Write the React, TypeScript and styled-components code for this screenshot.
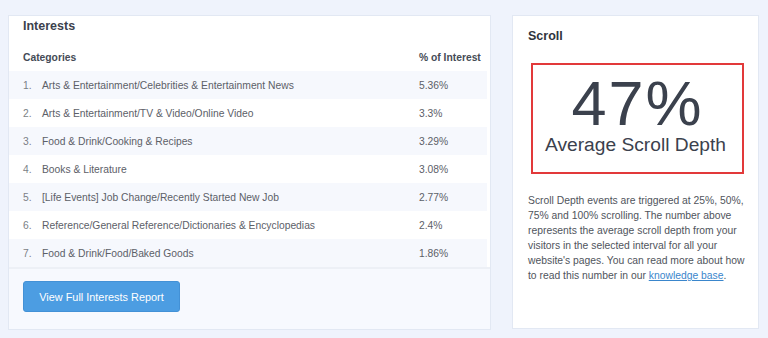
import React from "react";
import styled, { createGlobalStyle } from "styled-components";

const Global = createGlobalStyle`
  html, body { margin: 0; padding: 0; background: #eff3fc; }
  body { font-family: "Liberation Sans", Arial, sans-serif; overflow: hidden; }
`;

const Page = styled.div`
  display: flex;
  align-items: flex-start;
  gap: 21px;
  padding: 15px 0 0 8px;
  width: 768px;
  height: 338px;
  box-sizing: border-box;
`;

const Card = styled.section<{ $w: number; $h: number }>`
  width: ${(p) => p.$w}px;
  height: ${(p) => p.$h}px;
  box-sizing: border-box;
  background: #ffffff;
  border: 1px solid #e2e8f3;
  display: flex;
  flex-direction: column;
`;

const CardTitle = styled.h2`
  margin: 0;
  height: 27px;
  line-height: 20px;
  padding: 0 0 0 14px;
  font-size: 12.5px;
  font-weight: bold;
  color: #3b414d;
`;

const Table = styled.div`
  margin-right: 3px;
  display: flex;
  flex-direction: column;
`;

const Row = styled.div<{ $striped?: boolean; $head?: boolean }>`
  display: grid;
  grid-template-columns: 19px 1fr 68px;
  align-items: center;
  height: 28px;
  padding-left: 14px;
  background: ${(p) => (p.$striped ? "#f6f8fd" : "#ffffff")};
  font-size: 10.3px;
  font-weight: ${(p) => (p.$head ? "bold" : "normal")};
  color: ${(p) => (p.$head ? "#454b56" : "#5c6068")};
`;

const Num = styled.span`
  color: #7b7f86;
`;

const HeadCell = styled.span<{ $span?: boolean }>`
  grid-column: ${(p) => (p.$span ? "1 / 3" : "auto")};
`;

const Footer = styled.div`
  flex: 1;
  background: #f7f9fe;
  border-top: 2px solid #edf0f6;
  padding: 12px 0 0 14px;
`;

const Button = styled.button`
  width: 157px;
  height: 31px;
  background: #4c9de2;
  border: 1px solid #4391d6;
  border-radius: 3px;
  color: #ffffff;
  font-family: "Liberation Sans", Arial, sans-serif;
  font-size: 10.9px;
  padding: 0;
  cursor: pointer;
`;

const ScrollTitle = styled.h2`
  margin: 0;
  padding: 13px 0 0 15px;
  height: 36px;
  box-sizing: border-box;
  font-size: 12.5px;
  font-weight: bold;
  color: #2f343d;
`;

const Highlight = styled.div`
  margin: 11px 0 0 18px;
  width: 213px;
  height: 111px;
  box-sizing: border-box;
  border: 2px solid #e2393a;
  display: flex;
  flex-direction: column;
  align-items: center;
  color: #3b414d;
`;

const BigNumber = styled.div`
  font-size: 63px;
  line-height: 61px;
  margin-top: 8px;
  letter-spacing: 2px;
`;

const BigLabel = styled.div`
  font-size: 19.2px;
  line-height: 22px;
  margin-right: 4px;
`;

const Description = styled.p`
  margin: 19px 0 0 15px;
  width: 222px;
  font-size: 10.35px;
  line-height: 15.1px;
  color: #4f545c;
`;

const Link = styled.a`
  color: #3a86cc;
  text-decoration: underline;
`;

const rows: [string, string][] = [
  ["Arts & Entertainment/Celebrities & Entertainment News", "5.36%"],
  ["Arts & Entertainment/TV & Video/Online Video", "3.3%"],
  ["Food & Drink/Cooking & Recipes", "3.29%"],
  ["Books & Literature", "3.08%"],
  ["[Life Events] Job Change/Recently Started New Job", "2.77%"],
  ["Reference/General Reference/Dictionaries & Encyclopedias", "2.4%"],
  ["Food & Drink/Food/Baked Goods", "1.86%"],
];

export default function App() {
  return (
    <>
      <Global />
      <Page>
        <Card $w={483} $h={315}>
          <CardTitle>Interests</CardTitle>
          <Table>
            <Row $head>
              <HeadCell $span>Categories</HeadCell>
              <HeadCell>% of Interest</HeadCell>
            </Row>
            {rows.map(([name, pct], i) => (
              <Row key={name} $striped={i % 2 === 0}>
                <Num>{i + 1}.</Num>
                <span>{name}</span>
                <span>{pct}</span>
              </Row>
            ))}
          </Table>
          <Footer>
            <Button>View Full Interests Report</Button>
          </Footer>
        </Card>
        <Card $w={247} $h={314}>
          <ScrollTitle>Scroll</ScrollTitle>
          <Highlight>
            <BigNumber>47%</BigNumber>
            <BigLabel>Average Scroll Depth</BigLabel>
          </Highlight>
          <Description>
            Scroll Depth events are triggered at 25%, 50%, 75% and 100% scrolling. The
            number above represents the average scroll depth from your visitors in the
            selected interval for all your website's pages. You can read more about how
            to read this number in our <Link href="#">knowledge base</Link>.
          </Description>
        </Card>
      </Page>
    </>
  );
}
